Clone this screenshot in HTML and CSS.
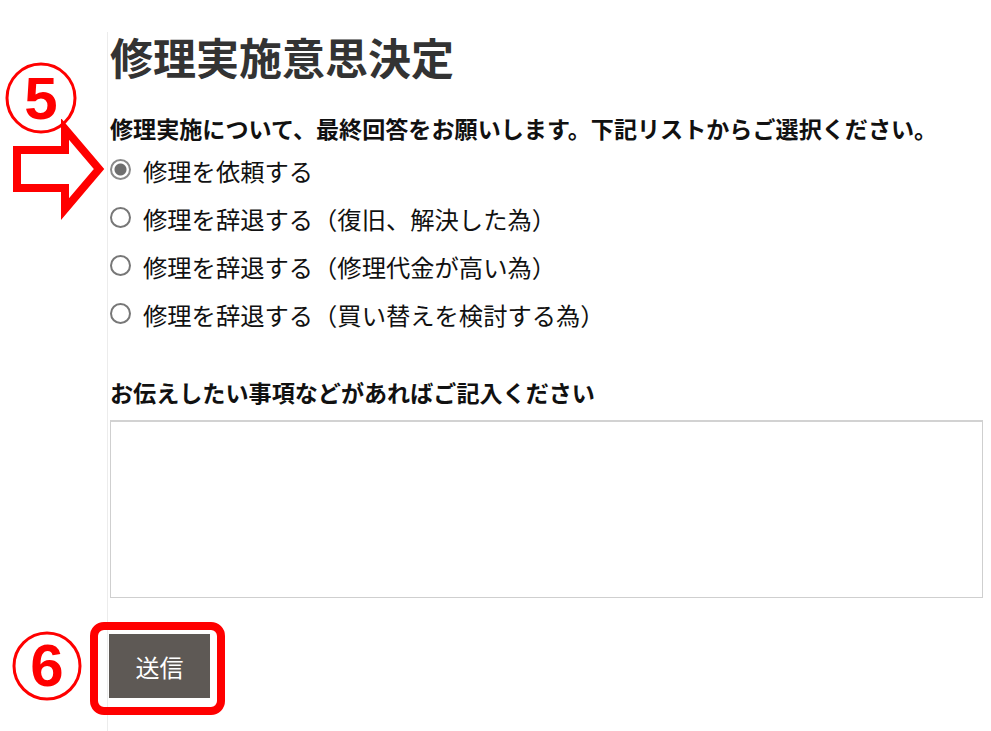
FILE: index.html
```html
<!DOCTYPE html>
<html lang="ja">
<head>
    <meta charset="UTF-8">
    <title>修理実施意思決定</title>
    <link rel="stylesheet" href="styles.css">
</head>
<body>
<div class="page">
    <form class="decision">
        <h1>修理実施意思決定</h1>
        <p class="lead">修理実施について、最終回答をお願いします。下記リストからご選択ください。</p>
        <ul class="choices">
            <li><label><input type="radio" name="answer" checked>修理を依頼する</label></li>
            <li><label><input type="radio" name="answer">修理を辞退する（復旧、解決した為）</label></li>
            <li><label><input type="radio" name="answer">修理を辞退する（修理代金が高い為）</label></li>
            <li><label><input type="radio" name="answer">修理を辞退する（買い替えを検討する為）</label></li>
        </ul>
        <p class="lead note">お伝えしたい事項などがあればご記入ください</p>
        <textarea class="memo"></textarea>
        <button type="button" class="submit">送信</button>
    </form>

    <!-- 注釈 -->
    <svg class="mark mark-5" width="80" height="80" viewBox="0 0 80 80">
        <circle cx="40" cy="40" r="34" fill="none" stroke="#f00" stroke-width="3"/>
        <text x="40" y="61" text-anchor="middle" class="num">5</text>
    </svg>
    <svg class="arrow" width="110" height="110" viewBox="0 0 110 110">
        <polygon points="17,31 65,31 65,10 99,50 65,90 65,69 17,69" fill="#fff" stroke="#f00" stroke-width="8"/>
    </svg>
    <svg class="mark mark-6" width="80" height="80" viewBox="0 0 80 80">
        <circle cx="40" cy="40" r="33" fill="none" stroke="#f00" stroke-width="3"/>
        <text x="40" y="60" text-anchor="middle" class="num">6</text>
    </svg>
    <div class="frame"></div>
</div>
</body>
</html>
```

FILE: styles.css
```css
* {
    margin: 0;
    padding: 0;
    box-sizing: border-box;
}

body {
    font-family: "Noto Sans CJK JP", "Noto Sans", sans-serif;
    color: #111;
    background: #fff;
}

.page {
    position: relative;
    height: 731px;
    overflow: hidden;
    padding-top: 32px;
}

.decision {
    margin-left: 107px;
    border-left: 1px solid #ececec;
    padding-left: 2px;
    min-height: 700px;
    display: flex;
    flex-direction: column;
    align-items: flex-start;
}

h1 {
    font-size: 43px;
    line-height: 48px;
    font-weight: 700;
    color: #333;
}

.lead {
    margin-top: 31px;
    font-size: 23.1px;
    line-height: 34px;
    font-weight: 700;
    color: #111;
}

.choices {
    list-style: none;
    margin-top: 2px;
}

.choices li {
    height: 48px;
    line-height: 48px;
    font-size: 24.3px;
}

.choices label {
    display: flex;
    align-items: center;
}

.choices input {
    appearance: none;
    -webkit-appearance: none;
    width: 21px;
    height: 21px;
    margin: 0 12px 0 0;
    border: 2px solid #777;
    border-radius: 50%;
    background: #fff;
    position: relative;
    top: -2px;
}

.choices input:checked {
    border-color: #8a8a8a;
    background: radial-gradient(circle, #6e6e6e 0 5.5px, #fff 6.5px);
}

.note {
    margin-top: 36px;
}

.memo {
    margin-top: 11px;
    width: 873px;
    height: 178px;
    border: 1px solid #cfcfcf;
    border-top: 2px solid #d2d2d2;
    resize: none;
    background: #fff;
}

.submit {
    margin-top: 36px;
    margin-left: -1px;
    width: 101px;
    height: 64px;
    border: none;
    background: #5e5955;
    color: #fff;
    font-family: inherit;
    font-size: 24px;
    cursor: pointer;
}

/* 注釈 */
.mark {
    position: absolute;
}

.mark .num {
    font-family: "Liberation Sans", Arial, sans-serif;
    font-size: 60px;
    font-weight: 700;
    fill: #f00;
}

.mark-5 {
    left: 1px;
    top: 58px;
}

.mark-6 {
    left: 7px;
    top: 626px;
}

.arrow {
    position: absolute;
    left: 0;
    top: 119px;
}

.frame {
    position: absolute;
    left: 90px;
    top: 622px;
    width: 135px;
    height: 93px;
    border: 8px solid #f00;
    border-radius: 14px;
}
```
